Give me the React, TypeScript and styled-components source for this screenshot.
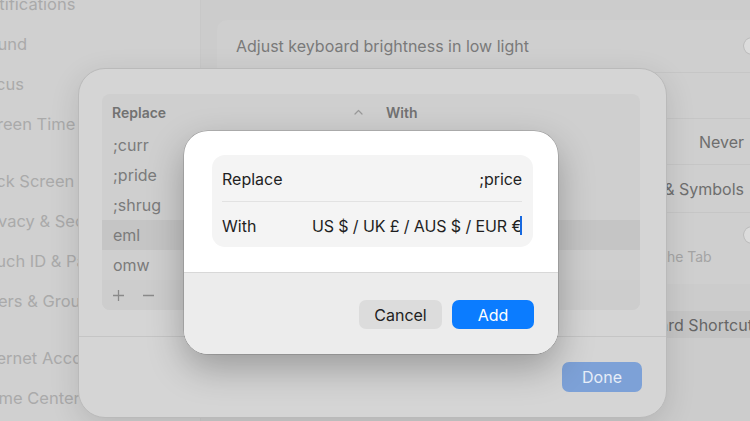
import React from "react";
import styled, { createGlobalStyle } from "styled-components";

const Global = createGlobalStyle`
  html, body { margin: 0; padding: 0; }
  body {
    width: 750px;
    height: 421px;
    overflow: hidden;
    background: #cdcdcd;
    font-family: Inter, "Noto Sans", "Liberation Sans", sans-serif;
    -webkit-font-smoothing: antialiased;
  }
  #root { width: 750px; height: 421px; }
`;

const Stage = styled.div`
  position: relative;
  width: 750px;
  height: 421px;
  overflow: hidden;
`;

/* ---------- background settings window ---------- */
const Window = styled.div`
  display: flex;
  width: 100%;
  height: 100%;
  background: #cccccc;
`;

const Sidebar = styled.nav`
  width: 200px;
  flex: none;
  background: #d0d0d0;
  border-right: 1px solid #c8c8c8;
  overflow: hidden;
`;

const SideList = styled.ul`
  list-style: none;
  margin: -16px 0 0 -23px;
  padding: 0;
  display: flex;
  flex-direction: column;
`;

const SideItem = styled.li<{ $gapBefore?: boolean }>`
  height: 40px;
  display: flex;
  align-items: center;
  margin-top: ${(p) => (p.$gapBefore ? "17px" : "0")};
  font-size: 16.5px;
  color: #aaaaaa;
  white-space: nowrap;
`;

const Main = styled.main`
  flex: 1;
  min-width: 0;
  padding: 20px 0 0 16px;
  display: flex;
  flex-direction: column;
  align-items: flex-start;
`;

const Card = styled.section`
  width: 572px;
  flex: none;
  background: #cfcfcf;
  border-radius: 10px;
  display: flex;
  flex-direction: column;
`;

const SetRow = styled.div<{ $h: number; $line?: boolean; $top?: boolean }>`
  height: ${(p) => p.$h}px;
  display: flex;
  align-items: ${(p) => (p.$top ? "flex-start" : "center")};
  justify-content: space-between;
  padding: ${(p) => (p.$top ? "13px" : "0")} 16px 0 19px;
  border-top: ${(p) => (p.$line ? "1px solid #c6c6c6" : "none")};
  box-sizing: border-box;
  white-space: nowrap;
`;

const SetLabel = styled.span`
  font-size: 16px;
  line-height: 19px;
  color: #7a7a7a;
`;

const SetCol = styled.div`
  display: flex;
  flex-direction: column;
  gap: 3px;
`;

const SetDesc = styled.span`
  font-size: 14px;
  line-height: 17px;
  letter-spacing: -0.04px;
  color: #a4a4a4;
`;

const Popup = styled.span`
  display: flex;
  align-items: center;
  gap: 8px;
  font-size: 16px;
  color: #6e6e6e;
  padding-right: 12px;
`;

const Toggle = styled.span`
  width: 30px;
  height: 18px;
  border-radius: 9px;
  background: #c4c4c4;
  position: relative;
  flex: none;
  &::after {
    content: "";
    position: absolute;
    left: 1px;
    top: 1px;
    width: 16px;
    height: 16px;
    border-radius: 50%;
    background: #dcdcdc;
    box-shadow: 0 0 0 0.5px #b5b5b5;
  }
`;

const ButtonRow = styled.div`
  width: 568px;
  flex: none;
  display: flex;
  justify-content: flex-end;
  margin-top: 27px;
`;

const GreyButton = styled.span`
  height: 27px;
  display: flex;
  align-items: center;
  padding: 0 10px 0 10px;
  background: #c5c5c5;
  border-radius: 6px;
  font-size: 16px;
  color: #666666;
  white-space: nowrap;
`;

/* ---------- text replacements sheet ---------- */
const Sheet = styled.div`
  position: absolute;
  left: 78px;
  top: 68px;
  width: 589px;
  height: 350px;
  box-sizing: border-box;
  border-radius: 27px;
  background: #d5d5d5;
  border: 1px solid #bababa;
  box-shadow: 0 8px 30px rgba(0, 0, 0, 0.12);
  display: flex;
  flex-direction: column;
`;

const SheetBody = styled.div`
  padding: 25px 26px 0 23px;
`;

const Table = styled.div`
  background: #cfcfcf;
  border-radius: 8px;
  display: flex;
  flex-direction: column;
  overflow: hidden;
`;

const TableHead = styled.div`
  height: 36px;
  display: flex;
  align-items: center;
  padding: 0 10px;
`;

const HeadCell = styled.div<{ $w?: number }>`
  width: ${(p) => (p.$w ? `${p.$w}px` : "auto")};
  flex: ${(p) => (p.$w ? "none" : "1")};
  display: flex;
  align-items: center;
  justify-content: space-between;
  padding-right: ${(p) => (p.$w ? "13px" : "0")};
  padding-left: ${(p) => (p.$w ? "0" : "10px")};
  box-sizing: border-box;
  font-size: 14px;
  font-weight: 600;
  color: #727272;
`;

const TableRow = styled.div<{ $sel?: boolean }>`
  height: 30px;
  display: flex;
  align-items: center;
  padding: 0 11px;
  background: ${(p) => (p.$sel ? "#c5c5c5" : "transparent")};
  font-size: 16px;
  color: #7b7b7b;
`;

const TableTools = styled.div`
  height: 30px;
  display: flex;
  align-items: center;
  gap: 17px;
  padding: 0 10px;
  background: #cdcdcd;
  color: #8c8c8c;
`;

const Divider = styled.div`
  height: 1px;
  background: #c5c5c5;
  margin-top: 26px;
`;

const SheetFooter = styled.div`
  display: flex;
  justify-content: flex-end;
  padding: 25px 24px 0;
`;

const DoneButton = styled.span`
  width: 80px;
  height: 30px;
  border-radius: 7px;
  background: #7da1d7;
  color: #e6edf8;
  font-size: 16px;
  display: flex;
  align-items: center;
  justify-content: center;
`;

/* ---------- add dialog ---------- */
const Dialog = styled.div`
  position: absolute;
  left: 184px;
  top: 131px;
  width: 374px;
  height: 223px;
  border-radius: 24px;
  background: #ffffff;
  overflow: hidden;
  display: flex;
  flex-direction: column;
  box-shadow: 0 0 0 0.5px rgba(0, 0, 0, 0.25), 0 14px 36px rgba(0, 0, 0, 0.28);
`;

const DialogBody = styled.div`
  padding: 24px 25px 25px 28px;
`;

const FieldGroup = styled.div`
  background: #f4f4f4;
  border-radius: 13px;
  padding: 0 11px 0 10px;
  display: flex;
  flex-direction: column;
`;

const Field = styled.div<{ $line?: boolean }>`
  height: 46px;
  display: flex;
  align-items: center;
  justify-content: space-between;
  padding-top: 2px;
  box-sizing: border-box;
  border-top: ${(p) => (p.$line ? "1px solid #e2e2e2" : "none")};
  font-size: 16px;
  color: #1f1f1f;
`;

const FieldValue = styled.span`
  display: flex;
  align-items: center;
  white-space: nowrap;
  letter-spacing: -0.1px;
`;

const Caret = styled.span`
  width: 2px;
  height: 19px;
  background: #1769e0;
  margin-left: -2px;
`;

const DialogFooter = styled.div`
  flex: 1;
  background: #ececec;
  border-top: 1px solid #d8d8d8;
  display: flex;
  justify-content: flex-end;
  align-items: flex-start;
  gap: 10px;
  padding: 27px 24px 0 0;
`;

const DialogButton = styled.span<{ $primary?: boolean }>`
  width: ${(p) => (p.$primary ? 82 : 83)}px;
  height: 29px;
  border-radius: 7px;
  background: ${(p) => (p.$primary ? "#0b7cff" : "#dcdcdc")};
  color: ${(p) => (p.$primary ? "#ffffff" : "#222222")};
  font-size: 16px;
  display: flex;
  align-items: center;
  justify-content: center;
`;

const Chevron = () => (
  <svg width="9" height="6" viewBox="0 0 9 6" fill="none">
    <path d="M1 5 L4.5 1.5 L8 5" stroke="#9a9a9a" strokeWidth="1.2" strokeLinecap="round" strokeLinejoin="round" />
  </svg>
);

const UpDown = () => (
  <svg width="9" height="14" viewBox="0 0 9 14" fill="none">
    <path d="M1.5 5 L4.5 2 L7.5 5 M1.5 9 L4.5 12 L7.5 9" stroke="#7a7a7a" strokeWidth="1.3" strokeLinecap="round" strokeLinejoin="round" />
  </svg>
);

const Plus = () => (
  <svg width="13" height="13" viewBox="0 0 13 13">
    <path d="M6.5 1 V12 M1 6.5 H12" stroke="#8a8a8a" strokeWidth="1.3" />
  </svg>
);

const Minus = () => (
  <svg width="13" height="13" viewBox="0 0 13 13">
    <path d="M1 6.5 H12" stroke="#8a8a8a" strokeWidth="1.3" />
  </svg>
);

const sideItems: { label: string; gap?: boolean }[] = [
  { label: "Notifications" },
  { label: "Sound" },
  { label: "Focus" },
  { label: "Screen Time" },
  { label: "Lock Screen", gap: true },
  { label: "Privacy & Security" },
  { label: "Touch ID & Password" },
  { label: "Users & Groups" },
  { label: "Internet Accounts", gap: true },
  { label: "Game Center" },
];

const replacements = [
  { key: ";curr", sel: false },
  { key: ";pride", sel: false },
  { key: ";shrug", sel: false },
  { key: "eml", sel: true },
  { key: "omw", sel: false },
];

export default function App() {
  return (
    <Stage>
      <Global />
      <Window>
        <Sidebar>
          <SideList>
            {sideItems.map((s) => (
              <SideItem key={s.label} $gapBefore={s.gap}>
                {s.label}
              </SideItem>
            ))}
          </SideList>
        </Sidebar>
        <Main>
          <Card>
            <SetRow $h={52}>
              <SetLabel>Adjust keyboard brightness in low light</SetLabel>
              <Toggle />
            </SetRow>
            <SetRow $h={46} $line>
              <SetLabel>Keyboard brightness</SetLabel>
            </SetRow>
            <SetRow $h={46} $line>
              <SetLabel>Turn keyboard backlight off after inactivity</SetLabel>
              <Popup>
                Never
                <UpDown />
              </Popup>
            </SetRow>
            <SetRow $h={48} $line>
              <SetLabel>Press 🌐︎ key to</SetLabel>
              <Popup>
                Show Emoji &amp; Symbols
                <UpDown />
              </Popup>
            </SetRow>
            <SetRow $h={72} $line $top>
              <SetCol>
                <SetLabel>Keyboard navigation</SetLabel>
                <SetDesc>Use keyboard navigation to move focus between controls. Press the Tab</SetDesc>
              </SetCol>
              <Toggle />
            </SetRow>
          </Card>
          <ButtonRow>
            <GreyButton>Keyboard Shortcuts…</GreyButton>
          </ButtonRow>
        </Main>
      </Window>

      <Sheet>
        <SheetBody>
          <Table>
            <TableHead>
              <HeadCell $w={264}>
                Replace
                <Chevron />
              </HeadCell>
              <HeadCell>With</HeadCell>
            </TableHead>
            {replacements.map((r) => (
              <TableRow key={r.key} $sel={r.sel}>
                {r.key}
              </TableRow>
            ))}
            <TableTools>
              <Plus />
              <Minus />
            </TableTools>
          </Table>
        </SheetBody>
        <Divider />
        <SheetFooter>
          <DoneButton>Done</DoneButton>
        </SheetFooter>
      </Sheet>

      <Dialog>
        <DialogBody>
          <FieldGroup>
            <Field>
              <span>Replace</span>
              <FieldValue>;price</FieldValue>
            </Field>
            <Field $line>
              <span>With</span>
              <FieldValue>
                US $ / UK £ / AUS $ / EUR €
                <Caret />
              </FieldValue>
            </Field>
          </FieldGroup>
        </DialogBody>
        <DialogFooter>
          <DialogButton>Cancel</DialogButton>
          <DialogButton $primary>Add</DialogButton>
        </DialogFooter>
      </Dialog>
    </Stage>
  );
}
